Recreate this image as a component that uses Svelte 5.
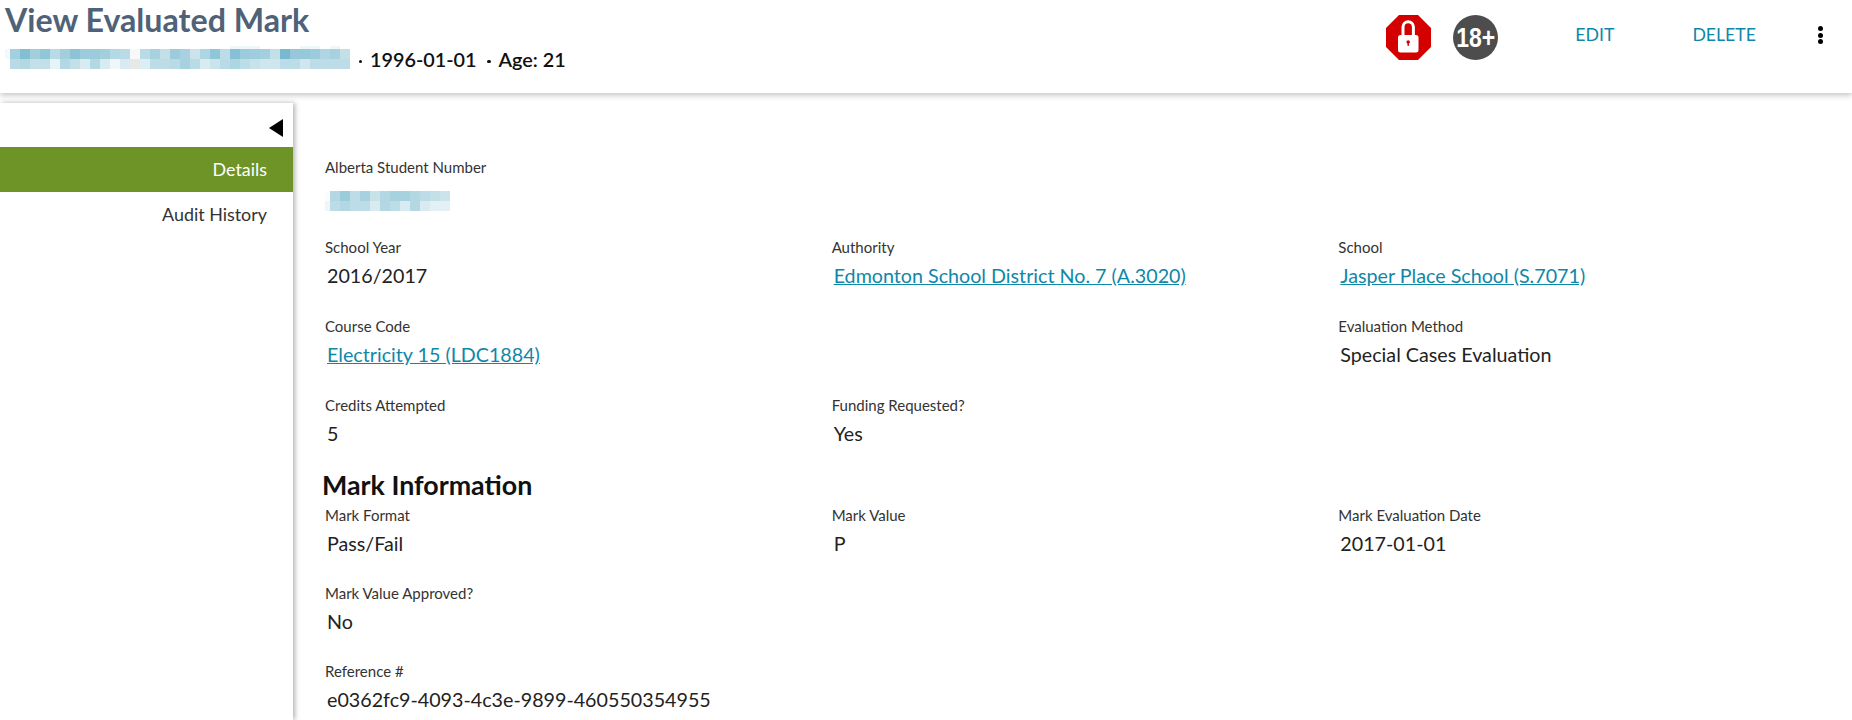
<script>
  const nameTiles = [
    ['#a3cfdf','#82bfd3','#a3cfdd','#8fc6d8','#b9dbe6','#a3cfdd','#8cc4d6','#9ccbdb','#9ccbdb','#a3cfdd','#b5d9e4','#b9dbe6','#f8f8f8','#b9dbe6','#a8d1df','#c3e0e9','#9ccbdb','#a8d1df','#cbe4ec','#aed5e2','#8fc6d8','#bcdce7','#86c0d4','#9ccbdb','#a0cddd','#a3cfdf','#c3e0e9','#78b9cf','#96c8da','#96c8da','#9ccbdb','#aed5e2','#a8d1df','#c3e0e9'],
    ['#b9dbe6','#b3d7e3','#c3e0e9','#c3e0e9','#e6f3f7','#b3d7e3','#c3e0e9','#d7ebf1','#b3d7e3','#d7ebf1','#eff7fa','#d7ebf1','#e8e8e8','#dcedf3','#bcdce7','#bcdce7','#b9dbe6','#a8d1df','#b9dbe6','#d7ebf1','#cbe4ec','#b9dbe6','#aed5e2','#bcdce7','#c8e2ea','#cfe6ee','#cfe6ee','#bcdce7','#bcdce7','#cfe6ee','#bcdce7','#bcdce7','#bcdce7','#bcdce7']
  ];
  const nameEdges = ['#f4f9fb', '#ffffff'];
  const nameCap = [...Array(22).fill('transparent'), '#f0f7fa', '#f0f7fa', '#f0f7fa', ...Array(4).fill('transparent'), '#f0f7fa', '#f0f7fa', 'transparent', '#f0f7fa'];
  const asnTiles = [
    ['#b3d7e3','#9ccbdb','#bcdce7','#a8d1df','#c8e2ea','#b3d7e3','#a8d1df','#a8d1df','#b3d7e3','#bcdce7','#c3e0e9','#cbe4ec'],
    ['#bcdce7','#b3d7e3','#bcdce7','#bcdce7','#d7ebf1','#b3d7e3','#bcdce7','#d7ebf1','#b3d7e3','#d7ebf1','#e3f0f5','#e3f0f5']
  ];
  const asnEdges = ['#fafcfd', '#eef6f8'];
  const top = [
    [{ label: 'School Year', value: '2016/2017' }, { label: 'Authority', value: 'Edmonton School District No. 7 (A.3020)', link: true }, { label: 'School', value: 'Jasper Place School (S.7071)', link: true }],
    [{ label: 'Course Code', value: 'Electricity 15 (LDC1884)', link: true }, null, { label: 'Evaluation Method', value: 'Special Cases Evaluation' }],
    [{ label: 'Credits Attempted', value: '5' }, { label: 'Funding Requested?', value: 'Yes' }, null]
  ].flat();
  const mark = [
    [{ label: 'Mark Format', value: 'Pass/Fail' }, { label: 'Mark Value', value: 'P' }, { label: 'Mark Evaluation Date', value: '2017-01-01' }],
    [{ label: 'Mark Value Approved?', value: 'No' }, null, null],
    [{ label: 'Reference #', value: 'e0362fc9-4093-4c3e-9899-460550354955' }, null, null]
  ].flat();
</script>

{#snippet mosaic(rows, edges, cap)}
  <div class="mosaic">
    {#if cap}
      <div class="mosaic-row cap">
        {#each cap as c}<span class="tile" style="background:{c}"></span>{/each}
      </div>
    {/if}
    {#each rows as row, i}
      <div class="mosaic-row">
        <span class="edge" style="background:{edges[i]}"></span>
        {#each row as c}<span class="tile" style="background:{c}"></span>{/each}
      </div>
    {/each}
  </div>
{/snippet}

{#snippet field(f)}
  {#if f}
    <div class="field">
      <div class="label">{f.label}</div>
      <div class="value">{#if f.link}<a href="#top">{f.value}</a>{:else}{f.value}{/if}</div>
    </div>
  {:else}
    <div></div>
  {/if}
{/snippet}

<div class="page">
  <header class="header">
    <div class="titles">
      <h1>View Evaluated Mark</h1>
      <div class="sub">
        {@render mosaic(nameTiles, nameEdges, nameCap)}
        <span class="meta"><i class="dot"></i>1996-01-01</span>
        <span class="meta"><i class="dot"></i>Age: 21</span>
      </div>
    </div>
    <div class="actions">
      <svg class="badge" viewBox="0 0 45 45" aria-hidden="true">
        <polygon points="13,0 32,0 45,13 45,32 32,45 13,45 0,32 0,13" fill="#d40000"/>
        <path d="M17 21v-9a5.2 5.2 0 0 1 10.4 0V21" fill="none" stroke="#fff" stroke-width="3"/>
        <rect x="12" y="20" width="20.5" height="17.5" rx="2.5" fill="#fff"/>
        <circle cx="22.2" cy="27" r="1.8" fill="#d40000"/>
        <rect x="21.5" y="27" width="1.4" height="4" fill="#d40000"/>
      </svg>
      <div class="age"><span>18+</span></div>
      <button class="act edit">EDIT</button>
      <button class="act del">DELETE</button>
      <div class="kebab"><i></i><i></i><i></i></div>
    </div>
  </header>

  <div class="body">
    <nav class="side">
      <div class="collapse"><span class="tri"></span></div>
      <div class="item active">Details</div>
      <div class="item">Audit History</div>
    </nav>
    <main class="content">
      <div class="field first">
        <div class="label">Alberta Student Number</div>
        <div class="asn">{@render mosaic(asnTiles, asnEdges, null)}</div>
      </div>
      <div class="grid">
        {#each top as f}{@render field(f)}{/each}
      </div>
      <h2>Mark Information</h2>
      <div class="grid tight">
        {#each mark as f}{@render field(f)}{/each}
      </div>
    </main>
  </div>
</div>

<style>
  :global(body) { margin: 0; background: #fff; overflow: hidden; }
  .page { height: 720px; overflow: hidden; font-family: Lato, "Liberation Sans", sans-serif; color: #222; }
  .header {
    height: 93px; display: flex; justify-content: space-between; background: #fff;
    box-shadow: 0 2px 6px rgba(0,0,0,.25); position: relative; z-index: 2;
  }
  .titles { padding-left: 5px; }
  h1 { margin: 0; font-size: 32.2px; line-height: 40px; font-weight: 700; color: #4f6278; }
  .sub { display: flex; align-items: center; margin: 7px 0 0 5px; font-size: 19.8px; font-weight: 600; color: #111; }
  .mosaic { display: flex; flex-direction: column; }
  .mosaic-row { display: flex; position: relative; }
  .cap { height: 3px; margin-top: -3px; overflow: hidden; }
  .tile { width: 10px; height: 10px; flex: none; }
  .edge { width: 5px; height: 10px; margin-left: -5px; flex: none; }
  .meta { display: inline-flex; align-items: center; white-space: nowrap; }
  .sub .meta:first-of-type { margin-left: 8.5px; }
  .meta + .meta { margin-left: 10.5px; }
  .dot { width: 3.5px; height: 3.5px; border-radius: 50%; background: #111; margin: 5px 8px 0 0; }
  .actions { display: flex; align-items: flex-start; padding-top: 15px; }
  .badge { width: 45px; height: 45px; margin-right: 22px; }
  .age { width: 45px; height: 45px; border-radius: 50%; background: #4d4d4d; color: #fff; display: flex; align-items: center; justify-content: center; font: 700 28px "Liberation Sans", sans-serif; }
  .age span { transform: scaleX(.82); white-space: nowrap; }
  .act { border: 0; background: none; padding: 0; font: 400 17.7px Lato, sans-serif; color: #0f87a8; line-height: 40px; height: 40px; }
  .edit { margin-left: 77px; }
  .del { margin-left: 78px; }
  .kebab { margin-left: 62px; margin-right: 29px; padding-top: 11px; display: flex; flex-direction: column; gap: 1.5px; }
  .kebab i { width: 5px; height: 5px; border-radius: 50%; background: #000; }
  .body { display: flex; height: 627px; }
  .side { width: 293px; flex: none; margin-top: 10px; background: #fff; box-shadow: 2px 0 5px rgba(0,0,0,.3); }
  .collapse { height: 44px; display: flex; align-items: center; justify-content: flex-end; padding-right: 10px; box-sizing: border-box; }
  .tri { width: 0; height: 0; border-style: solid; border-width: 9px 14px 9px 0; border-color: transparent #000 transparent transparent; margin-top: 6px; }
  .item { height: 45px; line-height: 45px; text-align: right; padding-right: 26px; font-size: 17.9px; color: #333; }
  .item.active { background: #6e9326; color: #fff; }
  .content { flex: 1; padding: 64.5px 7px 0 32px; min-width: 0; }
  .first { height: 80px; }
  .grid { display: grid; grid-template-columns: repeat(3, 1fr); grid-auto-rows: 56px; row-gap: 23px; }
  .grid.tight { row-gap: 22px; }
  .label { font-size: 15px; line-height: 18px; padding-bottom: 2px; color: #333; white-space: nowrap; }
  .value { font-size: 19.7px; line-height: 36px; padding-left: 2px; color: #222; white-space: nowrap; }
  .value a { color: #0f87a8; text-decoration: underline; }
  .asn { padding: 13px 0 0 5px; }
  h2 { margin: 17px 0 5px -3px; font-size: 26.8px; line-height: 32px; font-weight: 700; color: #111; }
</style>
